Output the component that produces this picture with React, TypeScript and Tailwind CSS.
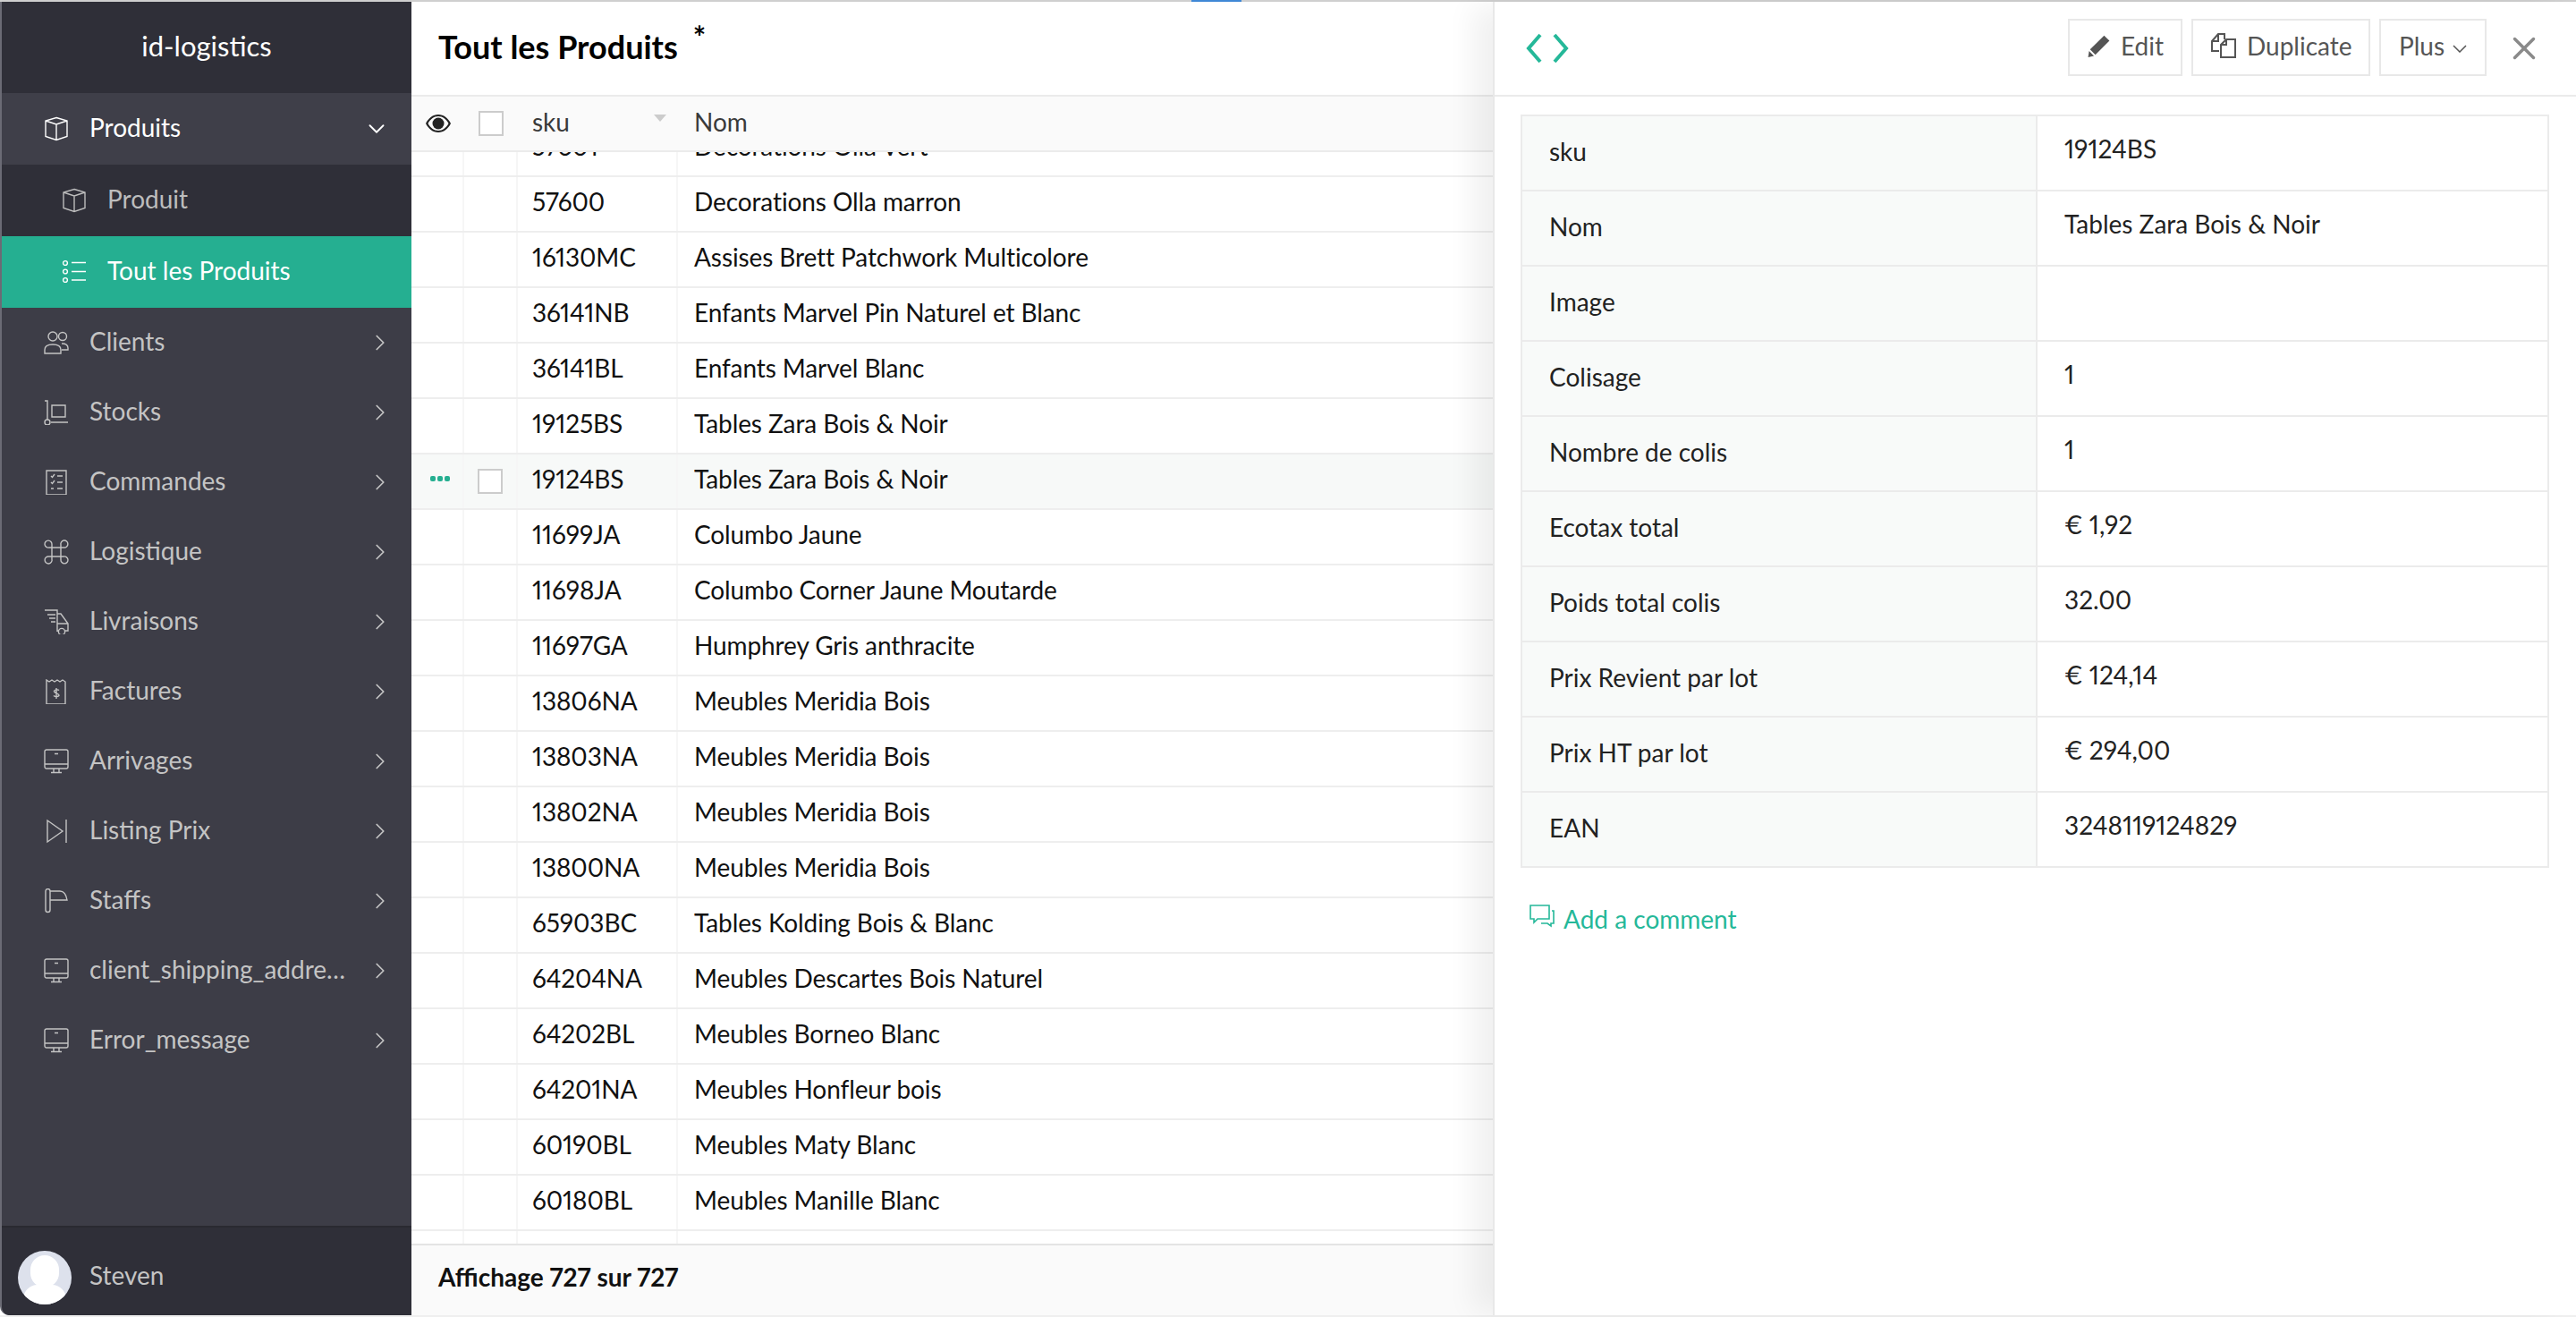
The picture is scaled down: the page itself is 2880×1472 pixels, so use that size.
import type { ReactNode } from "react"
import { ChevronDown, ChevronRight, X } from "lucide-react"

const FONT = "font-['Lato','Liberation_Sans',sans-serif]"

function Ico({ children, className = "" }: { children: ReactNode; className?: string }) {
  return (
    <svg viewBox="0 0 28 28" fill="none" stroke="currentColor" strokeWidth="1.4" className={`h-[28px] w-[28px] shrink-0 ${className}`}>
      {children}
    </svg>
  )
}

const BoxIcon = () => (
  <Ico>
    <path d="M14 1.5 26 5v17.5L14 26.5 2 22.5V5zM2 5l12 4 12-4M14 9v17.5" />
  </Ico>
)
const ListIcon = () => (
  <Ico>
    <circle cx="4" cy="4" r="2.4" />
    <circle cx="4" cy="13.5" r="2.4" />
    <circle cx="4" cy="23" r="2.4" />
    <path d="M11 3.5h16M11 13.5h16M11 23h16" />
  </Ico>
)
const UsersIcon = () => (
  <Ico>
    <circle cx="10" cy="7" r="5" />
    <circle cx="21" cy="7" r="4.5" />
    <path d="M1 26v-4c0-4 4-6 9-6s9 2 9 6v4zM20 15c4 0 7 1.5 7 5v2h-7" />
  </Ico>
)
const CartIcon = () => (
  <Ico>
    <path d="M1 1h3v21M9 6h15v13H9zM8 25h19" />
    <circle cx="4" cy="25" r="3" />
  </Ico>
)
const ChecklistIcon = () => (
  <Ico>
    <path d="M3 1h22v27H3zM8 7l1.5 1.5L12 5M15 7h6M8 14l1.5 1.5L12 12M15 14h6M8 21h3M15 21h6" />
  </Ico>
)
const CommandIcon = () => (
  <Ico>
    <path d="M9 9h10v10H9zM9 9H6a4 4 0 1 1 3-3.500zM19 9V6a4 4 0 1 1 3.500 3zM19 19h3a4 4 0 1 1-3 3.500zM9 19v3a4 4 0 1 1-3.500-3z" />
  </Ico>
)
const TruckIcon = () => (
  <Ico>
    <path d="M1 1h14v24M4 6h9M6 10h7M8 14h5M15 5h4l8 11v8h-3M15 16h12M16 24h-1" />
    <circle cx="20" cy="25" r="3.6" />
  </Ico>
)
const ReceiptIcon = () => (
  <Ico>
    <path d="M3 1l3 2 3-2 3 2 3-2 3 2 3-2 3 2v25H3zM14 10v12M17 12.5c-1-1-5-1-5.500 1s5.500 2.500 5.500 4.500-4.500 2-6 .5" />
  </Ico>
)
const MonitorIcon = () => (
  <Ico>
    <path d="M3 1h22a2 2 0 0 1 2 2v17a2 2 0 0 1-2 2H3a2 2 0 0 1-2-2V3a2 2 0 0 1 2-2zM1 17h26M11 22v4M17 22v4M8 26.500h12M12 5.500h4" />
  </Ico>
)
const SkipIcon = () => (
  <Ico>
    <path d="M4 2v24l17-12zM25 1v26" />
  </Ico>
)
const FlagIcon = () => (
  <Ico>
    <rect x="2" y="0.5" width="5" height="26" rx="2.5" />
    <path d="M7 3h11c4 0 7 4 8 10H7" />
  </Ico>
)

const NAV = [
  { label: "Clients", icon: <UsersIcon /> },
  { label: "Stocks", icon: <CartIcon /> },
  { label: "Commandes", icon: <ChecklistIcon /> },
  { label: "Logistique", icon: <CommandIcon /> },
  { label: "Livraisons", icon: <TruckIcon /> },
  { label: "Factures", icon: <ReceiptIcon /> },
  { label: "Arrivages", icon: <MonitorIcon /> },
  { label: "Listing Prix", icon: <SkipIcon /> },
  { label: "Staffs", icon: <FlagIcon /> },
  { label: "client_shipping_addresses", icon: <MonitorIcon /> },
  { label: "Error_message", icon: <MonitorIcon /> },
]

const ROWS = [
  ["57601", "Decorations Olla Vert"],
  ["57600", "Decorations Olla marron"],
  ["16130MC", "Assises Brett Patchwork Multicolore"],
  ["36141NB", "Enfants Marvel Pin Naturel et Blanc"],
  ["36141BL", "Enfants Marvel Blanc"],
  ["19125BS", "Tables Zara Bois & Noir"],
  ["19124BS", "Tables Zara Bois & Noir"],
  ["11699JA", "Columbo Jaune"],
  ["11698JA", "Columbo Corner Jaune Moutarde"],
  ["11697GA", "Humphrey Gris anthracite"],
  ["13806NA", "Meubles Meridia Bois"],
  ["13803NA", "Meubles Meridia Bois"],
  ["13802NA", "Meubles Meridia Bois"],
  ["13800NA", "Meubles Meridia Bois"],
  ["65903BC", "Tables Kolding Bois & Blanc"],
  ["64204NA", "Meubles Descartes Bois Naturel"],
  ["64202BL", "Meubles Borneo Blanc"],
  ["64201NA", "Meubles Honfleur bois"],
  ["60190BL", "Meubles Maty Blanc"],
  ["60180BL", "Meubles Manille Blanc"],
  ["", ""],
]

const DETAILS = [
  ["sku", "19124BS"],
  ["Nom", "Tables Zara Bois & Noir"],
  ["Image", ""],
  ["Colisage", "1"],
  ["Nombre de colis", "1"],
  ["Ecotax total", "€ 1,92"],
  ["Poids total colis", "32.00"],
  ["Prix Revient par lot", "€ 124,14"],
  ["Prix HT par lot", "€ 294,00"],
  ["EAN", "3248119124829"],
]

function Sidebar() {
  return (
    <aside className="flex h-full w-[460px] shrink-0 flex-col overflow-hidden rounded-bl-[10px] border-l-2 border-[#6b6b75] bg-[#3d3d47] text-[28px]">
      <div className="flex h-[102px] items-center justify-center bg-[#2f2f38] pb-[3px] text-[31px] text-white">id-logistics</div>
      <div className="flex h-[80px] items-center bg-[#3f3f49] pl-[47px] pr-[24px] text-white">
        <BoxIcon />
        <span className="ml-[23px] flex-1 pb-[4px]">Produits</span>
        <ChevronDown size={30} strokeWidth={1.5} />
      </div>
      <div className="flex h-[80px] items-center bg-[#2f2f38] pl-[67px] text-[#bdbdbd]">
        <BoxIcon />
        <span className="ml-[23px] pb-[4px]">Produit</span>
      </div>
      <div className="flex h-[80px] items-center bg-[#25af91] pl-[67px] text-white">
        <ListIcon />
        <span className="ml-[23px] pb-[4px]">Tout les Produits</span>
      </div>
      <nav className="flex-1 text-[#c4c4c4]">
        {NAV.map((item) => (
          <div key={item.label} className="flex h-[78px] items-center pl-[47px] pr-[20px]">
            {item.icon}
            <span className="ml-[23px] min-w-0 flex-1 truncate pb-[4px]">{item.label}</span>
            <ChevronRight size={30} strokeWidth={1.4} className="ml-[16px] shrink-0" />
          </div>
        ))}
      </nav>
      <div className="flex h-[100px] shrink-0 items-center border-t-2 border-[#2a2a31] bg-[#2f2f38] pl-[18px] pt-[14px] text-[#c4c4c4]">
        <div className="relative h-[60px] w-[60px] overflow-hidden rounded-full bg-[#dde1ec]">
          <div className="absolute left-[14px] top-[5px] h-[36px] w-[32px] rounded-full bg-white" />
          <div className="absolute left-[6px] top-[38px] h-[24px] w-[48px] rounded-t-[16px] bg-white" />
        </div>
        <span className="ml-[20px] pb-[6px]">Steven</span>
      </div>
    </aside>
  )
}

function Checkbox() {
  return <div className="h-[28px] w-[28px] border-2 border-[#ccc] bg-white" />
}

function ListView() {
  return (
    <main className="flex min-w-0 flex-1 flex-col">
      <div className="flex h-[104px] shrink-0 items-center pb-[4px] pl-[30px]">
        <h1 className="text-[36px] font-bold leading-none text-black">Tout les Produits</h1>
        <span className="mb-[22px] ml-[17px] text-[34px] font-bold leading-none text-black">*</span>
      </div>
      <div className="flex h-[64px] shrink-0 items-center border-y-2 border-[#ebebeb] bg-[#fafafa] text-[28px] text-[#3a3a3a]">
        <div className="flex w-[59px] justify-center">
          <svg viewBox="0 0 28 20" className="h-[20px] w-[28px] text-[#222]">
            <path fill="currentColor" fillRule="evenodd" d="M14 0C8 0 3 4 0 10c3 6 8 10 14 10s11-4 14-10C25 4 20 0 14 0zm0 2c5 0 9 3.500 11.500 8C23 14.500 19 18 14 18S5 14.500 2.500 10C5 5.500 9 2 14 2z" />
            <circle cx="14" cy="10" r="6.500" fill="currentColor" />
          </svg>
        </div>
        <div className="flex w-[60px] justify-center">
          <Checkbox />
        </div>
        <div className="relative w-[179px] pb-[4px] pl-[16px]">
          sku
          <div className="absolute right-[13px] top-[13px] h-0 w-0 border-x-[7px] border-t-[8px] border-x-transparent border-t-[#ccc]" />
        </div>
        <div className="pb-[4px] pl-[18px]">Nom</div>
      </div>
      <div className="min-h-0 flex-1 overflow-hidden">
        <div className="-mt-[34px]">
          {ROWS.map(([sku, name], i) => (
            <div key={i} className={`flex h-[62px] items-stretch border-b-2 border-[#eeeeee] text-[28px] tracking-[-0.1px] text-[#111] ${i === 6 ? "bg-[#f7f9f8]" : ""}`}>
              <div className="flex w-[59px] items-center justify-center border-r-2 border-[#f6f6f6]">
                {i === 6 && (
                  <div className="mb-[6px] ml-[6px] flex gap-[2px]">
                    <span className="h-[6px] w-[6px] rounded-[2px] bg-[#25af91]" />
                    <span className="h-[6px] w-[6px] rounded-[2px] bg-[#25af91]" />
                    <span className="h-[6px] w-[6px] rounded-[2px] bg-[#25af91]" />
                  </div>
                )}
              </div>
              <div className="flex w-[60px] items-center justify-center border-r-2 border-[#f6f6f6]">{i === 6 && <Checkbox />}</div>
              <div className="flex w-[179px] items-center border-r-2 border-[#f6f6f6] pb-[6px] pl-[16px]">{sku}</div>
              <div className="flex items-center pb-[6px] pl-[18px]">{name}</div>
            </div>
          ))}
        </div>
      </div>
      <div className="flex h-[80px] shrink-0 items-center border-t-2 border-[#e4e4e4] bg-[#fafafa] pb-[9px] pl-[30px] text-[28px] font-bold text-[#111]">
        Affichage 727 sur 727
      </div>
    </main>
  )
}

function PanelButton({ children, className = "" }: { children: ReactNode; className?: string }) {
  return (
    <div className={`flex h-[64px] items-center border-2 border-[#e8e8e8] pb-[4px] text-[28px] text-[#555] ${className}`}>{children}</div>
  )
}

function DetailPanel() {
  return (
    <section className="z-10 flex h-full w-[1211px] shrink-0 flex-col border-l-2 border-[#e8e8e8] bg-white shadow-[-26px_0_30px_-4px_rgba(0,0,0,0.06)]">
      <div className="flex h-[106px] shrink-0 items-center border-b-2 border-[#ebebeb] pl-[34px] pr-[37px]">
        <svg viewBox="0 0 50 34" fill="none" stroke="#25b899" strokeWidth="4" className="h-[34px] w-[50px]">
          <path d="M17 2 4 17l13 15M33 2l13 15-13 15" />
        </svg>
        <div className="mb-[3px] ml-auto flex items-center gap-[10px]">
          <PanelButton className="w-[128px] gap-[11px] pl-[20px]">
            <svg viewBox="0 0 24 24" className="h-[26px] w-[26px] shrink-0" fill="#555">
              <path d="M17 1.500 22.500 7 8 21.500 2.500 16zM1.500 17.500l5 5-6 1.500z" />
            </svg>
            Edit
          </PanelButton>
          <PanelButton className="w-[200px] gap-[12px] pl-[20px]">
            <svg viewBox="0 0 28 28" className="h-[28px] w-[28px] shrink-0" fill="none" stroke="#555" strokeWidth="2">
              <path d="M9 20H1V9l7-8h7v6M11 13l6-6h10v20H11zM8 1v8H1M17 7v6h-6" />
            </svg>
            Duplicate
          </PanelButton>
          <PanelButton className="w-[120px] gap-[9px] pl-[20px]">
            Plus
            <svg viewBox="0 0 16 9" fill="none" stroke="#555" strokeWidth="1.5" className="mt-[8px] h-[9px] w-[16px] shrink-0">
              <path d="M1 1l7 7 7-7" />
            </svg>
          </PanelButton>
        </div>
        <X size={42} strokeWidth={2} className="ml-[21px] text-[#8a8a8a]" />
      </div>
      <div className="ml-[29px] mr-[30px] mt-[20px] border-x-2 border-t-2 border-[#ebebeb] text-[28px] text-[#222]">
        {DETAILS.map(([label, value]) => (
          <div key={label} className="flex h-[84px] border-b-2 border-[#ebebeb]">
            <div className="flex w-[576px] shrink-0 items-center border-r-2 border-[#ebebeb] bg-[#f8faf9] pb-[4px] pl-[30px]">{label}</div>
            <div className="flex items-center pb-[11px] pl-[30px]">{value}</div>
          </div>
        ))}
      </div>
      <div className="ml-[39px] mt-[36px] flex items-center text-[28px] text-[#25b899]">
        <svg viewBox="0 0 28 26" fill="none" stroke="currentColor" strokeWidth="1.6" className="mb-[6px] h-[26px] w-[28px]">
          <path d="M1 1h21v15H9l-4 4v-4H1zM25 7h2v14h-3v3l-4-3h-7" />
        </svg>
        <span className="ml-[10px]">Add a comment</span>
      </div>
    </section>
  )
}

export default function App() {
  return (
    <div className={`flex h-[1472px] w-[2880px] flex-col overflow-hidden bg-white proportional-nums ${FONT}`}>
      <div className="relative h-[2px] shrink-0 bg-[#cfcfcf]">
        <div className="absolute left-[1332px] top-0 h-[2px] w-[56px] bg-[#3f88d6]" />
      </div>
      <div className="flex min-h-0 flex-1">
        <Sidebar />
        <ListView />
        <DetailPanel />
      </div>
      <div className="h-[2px] shrink-0 bg-[#efefef]" />
    </div>
  )
}
